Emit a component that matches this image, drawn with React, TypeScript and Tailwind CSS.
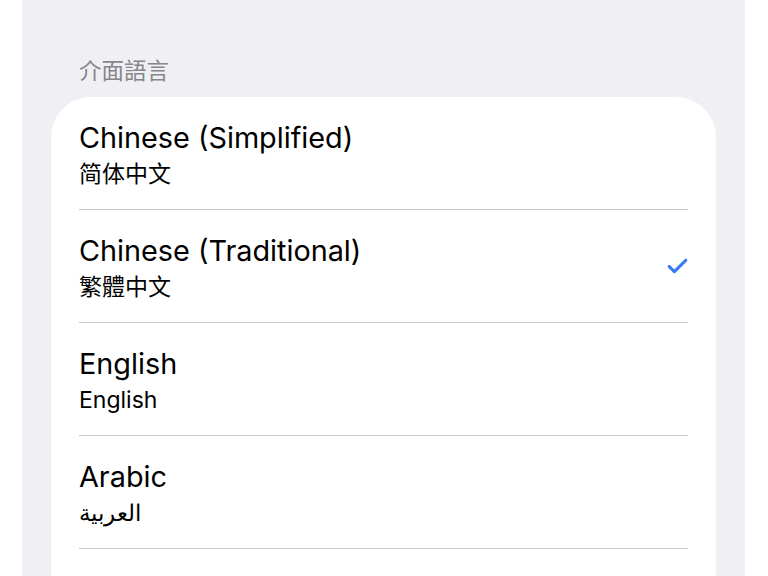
import { Check } from "lucide-react";

const languages = [
  { name: "Chinese (Simplified)", native: "简体中文", selected: false },
  { name: "Chinese (Traditional)", native: "繁體中文", selected: true },
  { name: "English", native: "English", selected: false },
  { name: "Arabic", native: "العربية", selected: false },
];

const App = () => {
  return (
    <div
      className="w-[768px] h-[576px] overflow-hidden bg-white"
      style={{ fontFamily: 'Inter, "Noto Sans CJK TC", "Noto Sans", sans-serif' }}
    >
      <div className="ml-[22px] w-[723px] h-full bg-[#efeff4] pt-[55px] px-[29px]">
        {/* section header */}
        <div className="pl-[28px] text-[22.5px] leading-[32px] text-[#86868b] h-[42px]">
          介面語言
        </div>

        {/* list card */}
        <div className="bg-white rounded-t-[40px] px-[28px] h-[600px]">
          {languages.map((lang) => (
            <div
              key={lang.name}
              className="h-[113px] flex items-center justify-between border-b border-[#c8c8cc]"
            >
              <div className="flex flex-col pt-[2px]">
                <span className="text-[28.8px] leading-[36px] text-black">
                  {lang.name}
                </span>
                <span className="text-[23px] leading-[30px] text-black mt-[3px]">
                  {lang.native}
                </span>
              </div>
              {lang.selected && (
                <Check
                  className="w-[25px] h-[25px] text-[#3478f6] mr-[-2px]"
                  strokeWidth={3}
                />
              )}
            </div>
          ))}
        </div>
      </div>
    </div>
  );
};

export default App;
